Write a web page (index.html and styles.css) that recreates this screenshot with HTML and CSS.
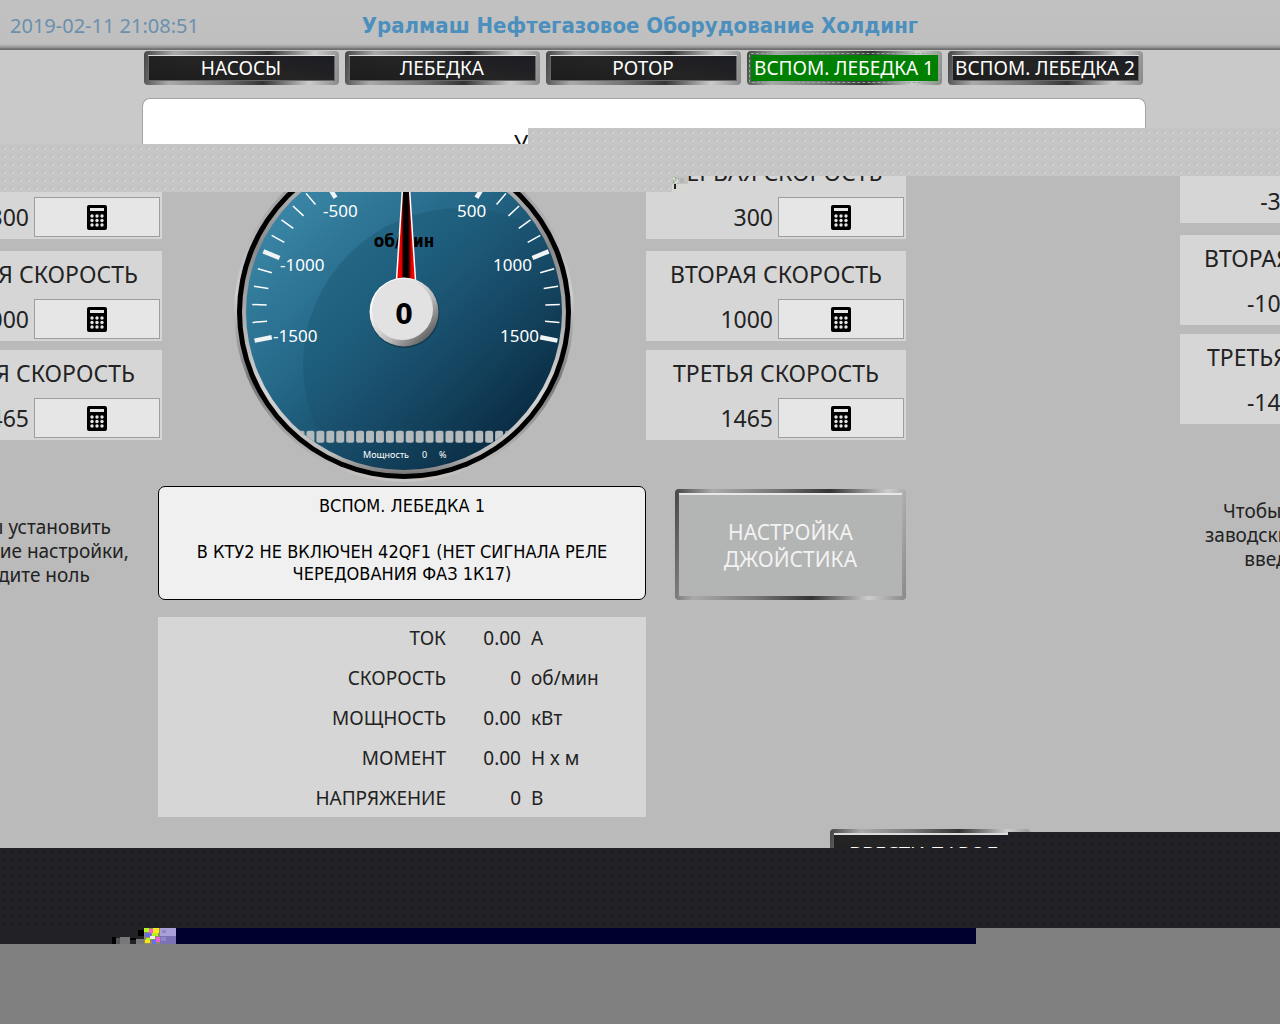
FILE: index.html
```html
<!DOCTYPE html>
<html lang="ru">
<head>
<meta charset="utf-8">
<title>Уралмаш Нефтегазовое Оборудование Холдинг</title>
<link rel="stylesheet" href="styles.css">
</head>
<body>
<svg class="defs" aria-hidden="true">
  <symbol id="calc" viewBox="0 0 20 25">
    <rect width="20" height="25" rx="2"/>
    <rect x="3" y="3" width="14" height="3" fill="#e6e6e6"/>
    <g fill="#e6e6e6">
      <circle cx="5" cy="11" r="1.7"/><circle cx="10" cy="11" r="1.7"/><circle cx="15" cy="11" r="1.7"/>
      <circle cx="5" cy="15.500" r="1.7"/><circle cx="10" cy="15.500" r="1.7"/><circle cx="15" cy="15.500" r="1.7"/>
      <circle cx="5" cy="20" r="1.7"/><circle cx="10" cy="20" r="1.7"/><circle cx="15" cy="20" r="1.7"/>
    </g>
  </symbol>
</svg>

<header class="topbar">
  <time class="clock">2019-02-11 21:08:51</time>
  <h1 class="title">Уралмаш Нефтегазовое Оборудование Холдинг</h1>
</header>

<nav class="tabs">
  <button class="metal tab">НАСОСЫ</button>
  <button class="metal tab">ЛЕБЕДКА</button>
  <button class="metal tab">РОТОР</button>
  <button class="metal tab active">ВСПОМ. ЛЕБЕДКА 1</button>
  <button class="metal tab">ВСПОМ. ЛЕБЕДКА 2</button>
</nav>

<section class="banner"><h2>У</h2></section>

<main class="board">
  <div class="col left">
    <section class="card first"><h3>ПЕРВАЯ СКОРОСТЬ</h3><div class="row"><output>-300</output><button class="edit" aria-label="Изменить"><svg><use href="#calc"/></svg></button></div></section>
    <section class="card"><h3>ВТОРАЯ СКОРОСТЬ</h3><div class="row"><output>-1000</output><button class="edit" aria-label="Изменить"><svg><use href="#calc"/></svg></button></div></section>
    <section class="card"><h3>ТРЕТЬЯ СКОРОСТЬ</h3><div class="row"><output>-1465</output><button class="edit" aria-label="Изменить"><svg><use href="#calc"/></svg></button></div></section>
    <p class="hint">Чтобы установить<br>заводские настройки,<br>введите ноль</p>
  </div>

  <div class="col center">
    <svg class="gauge" viewBox="230 144 344 342">
      <defs>
        <linearGradient id="face" x1="0.1" y1="0.1" x2="0.85" y2="0.88"><stop offset="0" stop-color="#3d8aaa"/><stop offset="0.45" stop-color="#236585"/><stop offset="1" stop-color="#0a2c44"/></linearGradient>
        <linearGradient id="outer" x1="0" y1="0" x2="0" y2="1"><stop offset="0" stop-color="#8c8c90"/><stop offset="0.45" stop-color="#cfcfd3"/><stop offset="0.7" stop-color="#777"/><stop offset="0.88" stop-color="#aaa"/><stop offset="1" stop-color="#cac6c4"/></linearGradient>
        <linearGradient id="inner" x1="0" y1="0" x2="0" y2="1"><stop offset="0" stop-color="#ccc"/><stop offset="0.3" stop-color="#888"/><stop offset="0.5" stop-color="#aaa"/><stop offset="0.75" stop-color="#d4d4d4"/><stop offset="0.94" stop-color="#bbb"/><stop offset="1" stop-color="#777"/></linearGradient>
        <linearGradient id="shine" x1="0" y1="0" x2="1" y2="1"><stop offset="0" stop-color="#003048" stop-opacity="0.250"/><stop offset="0.6" stop-color="#003048" stop-opacity="0"/></linearGradient>
        <linearGradient id="needle"><stop offset="0" stop-color="#e00"/><stop offset="0.25" stop-color="#e00"/><stop offset="0.38" stop-color="#000"/><stop offset="0.6" stop-color="#000"/><stop offset="0.8" stop-color="#e00"/><stop offset="1" stop-color="#f00"/></linearGradient>
        <linearGradient id="hub" x1="0" y1="0" x2="1" y2="1"><stop offset="0.2" stop-color="#fff"/><stop offset="0.6" stop-color="#bbb"/><stop offset="0.9" stop-color="#555"/></linearGradient>
        <clipPath id="disc"><circle cx="404" cy="312" r="158"/></clipPath>
        <path id="minor" d="M406 156.500V171" stroke="#fff" stroke-width="1.5"/>
        <path id="major" d="M406 156V173.500" stroke="#f0f4f6" stroke-width="4.500"/>
        <pattern id="cells" x="326.300" y="430" width="9.930" height="14" patternUnits="userSpaceOnUse"><rect y="0.700" width="8" height="12" rx="2" fill="#b4b9bc"/></pattern>
      </defs>
      <circle cx="404" cy="312" r="170" fill="url(#outer)"/>
      <circle cx="404" cy="312" r="167" fill="#000"/>
      <circle cx="404" cy="312" r="162" fill="url(#inner)"/>
      <circle cx="404" cy="312" r="158" fill="url(#face)"/>
      <g clip-path="url(#disc)">
        <circle cx="460" cy="365" r="157" fill="url(#shine)"/>
        <rect x="290" y="430" width="228" height="13" fill="url(#cells)"/>
      </g>
      <g>
        <use href="#major" transform="rotate(-101.300 406 310.400)"/><use href="#minor" transform="rotate(-94.500 406 310.400)"/><use href="#minor" transform="rotate(-87.800 406 310.400)"/><use href="#minor" transform="rotate(-81 406 310.400)"/><use href="#minor" transform="rotate(-74.300 406 310.400)"/>
        <use href="#major" transform="rotate(-67.500 406 310.400)"/><use href="#minor" transform="rotate(-60.800 406 310.400)"/><use href="#minor" transform="rotate(-54 406 310.400)"/><use href="#minor" transform="rotate(-47.300 406 310.400)"/><use href="#minor" transform="rotate(-40.500 406 310.400)"/>
        <use href="#major" transform="rotate(-32 406 310.400) translate(0 4)"/><use href="#major" transform="rotate(32 406 310.400) translate(0 4)"/>
        <use href="#minor" transform="rotate(40.500 406 310.400)"/><use href="#minor" transform="rotate(47.300 406 310.400)"/><use href="#minor" transform="rotate(54 406 310.400)"/><use href="#minor" transform="rotate(60.800 406 310.400)"/><use href="#major" transform="rotate(67.500 406 310.400)"/>
        <use href="#minor" transform="rotate(74.300 406 310.400)"/><use href="#minor" transform="rotate(81 406 310.400)"/><use href="#minor" transform="rotate(87.800 406 310.400)"/><use href="#minor" transform="rotate(94.500 406 310.400)"/><use href="#major" transform="rotate(101.300 406 310.400)"/>
      </g>
      <g class="scale">
        <text x="323" y="217">-500</text><text x="457" y="217">500</text>
        <text x="280" y="271">-1000</text><text x="493" y="271">1000</text>
        <text x="273" y="342">-1500</text><text x="500" y="342">1500</text>
      </g>
      <text class="unit" x="404" y="247">об/мин</text>
      <path d="M405 150L396.500 280H415.500L407 150Z" fill="url(#needle)" stroke="#fff" stroke-width="1.500"/>
      <circle cx="404.500" cy="313" r="35" fill="#123a50"/>
      <circle cx="404" cy="312" r="34.500" fill="url(#hub)"/>
      <circle cx="402.500" cy="309.500" r="30.500" fill="#e2e2e2"/>
      <text class="reading" x="404" y="324">0</text>
      <g class="power"><text x="363" y="458">Мощность</text><text x="422" y="458">0</text><text x="439" y="458">%</text></g>
    </svg>

    <section class="status">
      <p>ВСПОМ. ЛЕБЕДКА 1</p>
      <p>В КТУ2 НЕ ВКЛЮЧЕН 42QF1 (НЕТ СИГНАЛА РЕЛЕ ЧЕРЕДОВАНИЯ ФАЗ 1К17)</p>
    </section>

    <table class="readings">
      <tr><th scope="row">ТОК</th><td class="num">0.00</td><td>А</td></tr>
      <tr><th scope="row">СКОРОСТЬ</th><td class="num">0</td><td>об/мин</td></tr>
      <tr><th scope="row">МОЩНОСТЬ</th><td class="num">0.00</td><td>кВт</td></tr>
      <tr><th scope="row">МОМЕНТ</th><td class="num">0.00</td><td>Н х м</td></tr>
      <tr><th scope="row">НАПРЯЖЕНИЕ</th><td class="num">0</td><td>В</td></tr>
    </table>
  </div>

  <div class="col">
    <section class="card first"><h3>ПЕРВАЯ СКОРОСТЬ</h3><div class="row"><output>300</output><button class="edit" aria-label="Изменить"><svg><use href="#calc"/></svg></button></div></section>
    <section class="card"><h3>ВТОРАЯ СКОРОСТЬ</h3><div class="row"><output>1000</output><button class="edit" aria-label="Изменить"><svg><use href="#calc"/></svg></button></div></section>
    <section class="card"><h3>ТРЕТЬЯ СКОРОСТЬ</h3><div class="row"><output>1465</output><button class="edit" aria-label="Изменить"><svg><use href="#calc"/></svg></button></div></section>
    <button class="metal joystick">НАСТРОЙКА ДЖОЙСТИКА</button>
    <button class="metal password">ВВЕСТИ ПАРОЛЬ</button>
  </div>

  <div class="col far">
    <section class="card first"><h3>ПЕРВАЯ СКОРОСТЬ</h3><div class="row"><output>-300</output><button class="edit" aria-label="Изменить"><svg><use href="#calc"/></svg></button></div></section>
    <section class="card"><h3>ВТОРАЯ СКОРОСТЬ</h3><div class="row"><output>-1000</output><button class="edit" aria-label="Изменить"><svg><use href="#calc"/></svg></button></div></section>
    <section class="card"><h3>ТРЕТЬЯ СКОРОСТЬ</h3><div class="row"><output>-1465</output><button class="edit" aria-label="Изменить"><svg><use href="#calc"/></svg></button></div></section>
    <p class="hint">Чтобы установить<br>заводские настройки,<br>введите ноль</p>
  </div>

  <div class="noise upper"></div>
  <div class="noise full"></div>
  <div class="noise lower"></div>
  <svg class="speck" viewBox="0 0 16 16">
    <path d="M0 0H16V8H0z" fill="#bfc4bd"/><path d="M0 8H16V16H0z" fill="#d8d8d2"/>
    <path d="M1 2h2v1h-2zM5 4h1v2h-1zM3 6h2v1h-2z" fill="#e8f0e0"/><path d="M3 1h1v2h-1zM6 2h1v1h-1zM1 5h1v2h-1z" fill="#8ea095"/>
    <path d="M8 2h4v5h-4z" fill="#b8b2ba"/><path d="M2 8h2v5h-2z" fill="#222"/>
  </svg>
</main>

<footer class="footer">
  <div class="dark strip"></div>
  <div class="dark strip thin"></div>
  <div class="dark band"></div>
  <div class="tail">
    <div class="lead"></div>
    <svg class="glitch" viewBox="0 0 64 16">
      <path d="M0 0H32V16H0z" fill="#222126"/><path d="M8 9h10v7H8zM24 11h8v5H24z" fill="#77787a"/><path d="M0 9h4v7H0zM18 10h6v2h-6zM26 2h6v6h-6z" fill="#000"/><path d="M4 10h4v6H4z" fill="#555"/>
      <path d="M32 0H48V16H32z" fill="#8a8f5c"/><path d="M32 0h5v4h-5zM40 5h6v3h-6zM34 10h4v2h-4z" fill="#b6f21c"/><path d="M37 1h4v4h-4zM44 9h4v5h-4z" fill="#f060e0"/><path d="M41 0h6v5h-6zM33 12h5v3h-5z" fill="#ffe51a"/><path d="M33 5h6v4h-6zM40 12h4v4h-4z" fill="#6c6cf0"/><path d="M38 8h5v3h-5z" fill="#eee"/>
      <path d="M48 0H64V8H48z" fill="#a79fd6"/><path d="M48 8H64V16H48z" fill="#7a72b4"/><path d="M50 2h4v3h-4zM49 9h5v4h-5z" fill="#8f86c8"/>
    </svg>
    <div class="navy"></div>
  </div>
</footer>
</body>
</html>
```
FILE: styles.css
```css
* { box-sizing: border-box; }

body {
  margin: 0;
  min-height: 100vh;
  overflow-x: hidden;
  background: #808080;
  color: #222;
  font-family: "Noto Sans", "Open Sans", sans-serif;
  font-size: 19px;
}

h1, h2, h3, p { margin: 0; font-weight: normal; }
button { font-family: inherit; margin: 0; padding: 0; }
.defs { position: absolute; width: 0; height: 0; }

.topbar {
  display: grid;
  grid-template-columns: 1fr auto 1fr;
  align-items: center;
  height: 50px;
  padding: 0 10px;
  background: linear-gradient(#c2c2c2 0, #bfbfbf 44px, #8c8c8c 48px, #666 49px, #777 50px);
}
.clock { font-size: 20px; color: #6a90ad; }
.title {
  font-family: "DejaVu Sans Condensed", "DejaVu Sans", sans-serif;
  font-size: 22px;
  font-weight: bold;
  color: #4a8fbd;
}

.tabs {
  display: flex;
  justify-content: center;
  gap: 6px;
  padding: 1px 0 13px 6px;
  background: #c9c9c9;
}
.metal {
  border: 4px solid transparent;
  border-radius: 4px;
  color: #fff;
  background:
    linear-gradient(10deg, #1c1c1c, #242424 50%, #1b1b24) padding-box,
    linear-gradient(100deg, #444 0, #aaa 15%, #777 40%, #333 62%, #ccc 85%, #888) border-box;
}
.tab {
  width: 195px;
  height: 34px;
  font-size: 19px;
  line-height: 24px;
  white-space: nowrap;
  box-shadow: inset 0 1px #ddd, inset 0 0 0 1px #666;
}
.tab.active {
  background:
    linear-gradient(#008000, #008000) padding-box,
    linear-gradient(100deg, #444 0, #aaa 15%, #777 40%, #333 62%, #ccc 85%, #888) border-box;
  box-shadow: none;
  outline: 1px dashed #8cb08c;
  outline-offset: -3px;
}

.banner { height: 46px; padding: 0 134px 0 142px; background: #c9c9c9; }
.banner h2 {
  height: 46px;
  overflow: hidden;
  padding: 28px 0 0 371px;
  border: 1px solid #a4a4a4;
  border-bottom: 0;
  border-radius: 8px 8px 0 0;
  background: #fff;
  color: #111;
  font-size: 23px;
  line-height: 32px;
}

.board {
  position: relative;
  display: grid;
  grid-template-columns: 158px 488px 260px minmax(0, 1fr) 100px;
  background: #bababa;
}
.col { display: flex; flex-direction: column; padding-top: 5px; }
.left { align-items: flex-end; margin-right: -4px; }
.center { align-items: center; padding: 0 0 31px; }
.far { grid-column: 5; margin-top: -16px; }

.card {
  flex: none;
  width: 260px;
  height: 90px;
  margin-bottom: 9px;
  background: #d6d6d6;
}
.card.first { margin-bottom: 12px; }
.card h3 { height: 48px; font-size: 23px; line-height: 46px; text-align: center; }
.row { display: flex; gap: 5px; padding-right: 2px; }
.row output { width: 127px; font-size: 23px; line-height: 40px; text-align: right; }
.edit {
  display: grid;
  place-items: center;
  flex: 1;
  height: 40px;
  border: 1px solid #9c9f9f;
  background: #e6e6e6;
}
.edit svg { width: 20px; height: 25px; }
.hint {
  width: 260px;
  margin-top: 66px;
  padding-right: 8px;
  text-align: center;
  font-size: 19px;
  line-height: 24px;
}

.gauge { display: block; flex: none; width: 344px; height: 342px; }
.scale text { fill: #fff; font-size: 17px; }
.unit, .reading {
  font-family: "DejaVu Sans Condensed", "DejaVu Sans", sans-serif;
  font-weight: bold;
  text-anchor: middle;
}
.unit { font-size: 17px; }
.reading { font-size: 28px; }
.power text { fill: #fff; font-size: 9px; }

.status {
  width: 100%;
  height: 114px;
  padding: 8px 32px;
  border: 1px solid #000;
  border-radius: 7px;
  background: #f0f0f0;
  color: #000;
  font-family: "DejaVu Sans Condensed", "DejaVu Sans", sans-serif;
  font-size: 18px;
  line-height: 22px;
  text-align: center;
}
.status p + p { margin-top: 24px; }

.readings {
  width: 100%;
  margin-top: 17px;
  border-collapse: collapse;
  table-layout: fixed;
  background: #d6d6d6;
}
.readings tr { height: 40px; }
.readings th { width: 288px; padding: 2px 0 0; font-weight: normal; text-align: right; }
.readings td { padding: 2px 0 0 10px; }
.readings .num { width: 75px; padding: 2px 0 0; text-align: right; }

.joystick {
  align-self: flex-end;
  width: 231px;
  height: 111px;
  margin-top: 40px;
  padding: 2px 40px 0;
  color: #f2f2f2;
  font-size: 21px;
  line-height: 27px;
  background:
    linear-gradient(#b3b4b4, #b3b4b4) padding-box,
    linear-gradient(100deg, #444 0, #aaa 15%, #777 40%, #333 62%, #ccc 85%, #888) border-box;
  box-shadow: inset 0 2px #e8e8e8;
}
.password {
  align-self: flex-start;
  width: 200px;
  height: 48px;
  margin: 229px 0 -29px 184px;
  font-size: 20px;
  box-shadow: inset 0 2px #ddd;
  white-space: nowrap;
}

/* dithered stripes over the board */
.noise {
  position: absolute;
  height: 16px;
  background:
    radial-gradient(circle at 5px 5px, #d2d2d2 1px, transparent 1px) 0 0 / 8px 8px,
    radial-gradient(circle at 4px 4px, #bcbcbc 1px, transparent 1px) 0 0 / 8px 8px,
    #c5c5c5;
}
.upper { top: -16px; left: 528px; right: 0; }
.full { top: 0; left: 0; right: 0; height: 32px; }
.lower { top: 32px; left: 0; width: 672px; }
.speck { position: absolute; top: 32px; left: 672px; width: 16px; height: 16px; }

.footer { position: relative; }
.dark {
  background:
    radial-gradient(circle at 4px 4px, #1a191d 1px, transparent 1px) 0 0 / 8px 8px,
    #222126;
}
.band { height: 80px; position: relative; }
.strip { position: absolute; top: -16px; left: 1008px; right: 0; height: 16px; }
.strip.thin { top: -8px; left: 1000px; height: 8px; }
.tail { display: flex; height: 16px; padding-right: 304px; }
.lead { width: 112px; background: #222126; }
.glitch { flex: none; width: 64px; height: 16px; }
.navy { flex: 1; background: #00002c; }
```
